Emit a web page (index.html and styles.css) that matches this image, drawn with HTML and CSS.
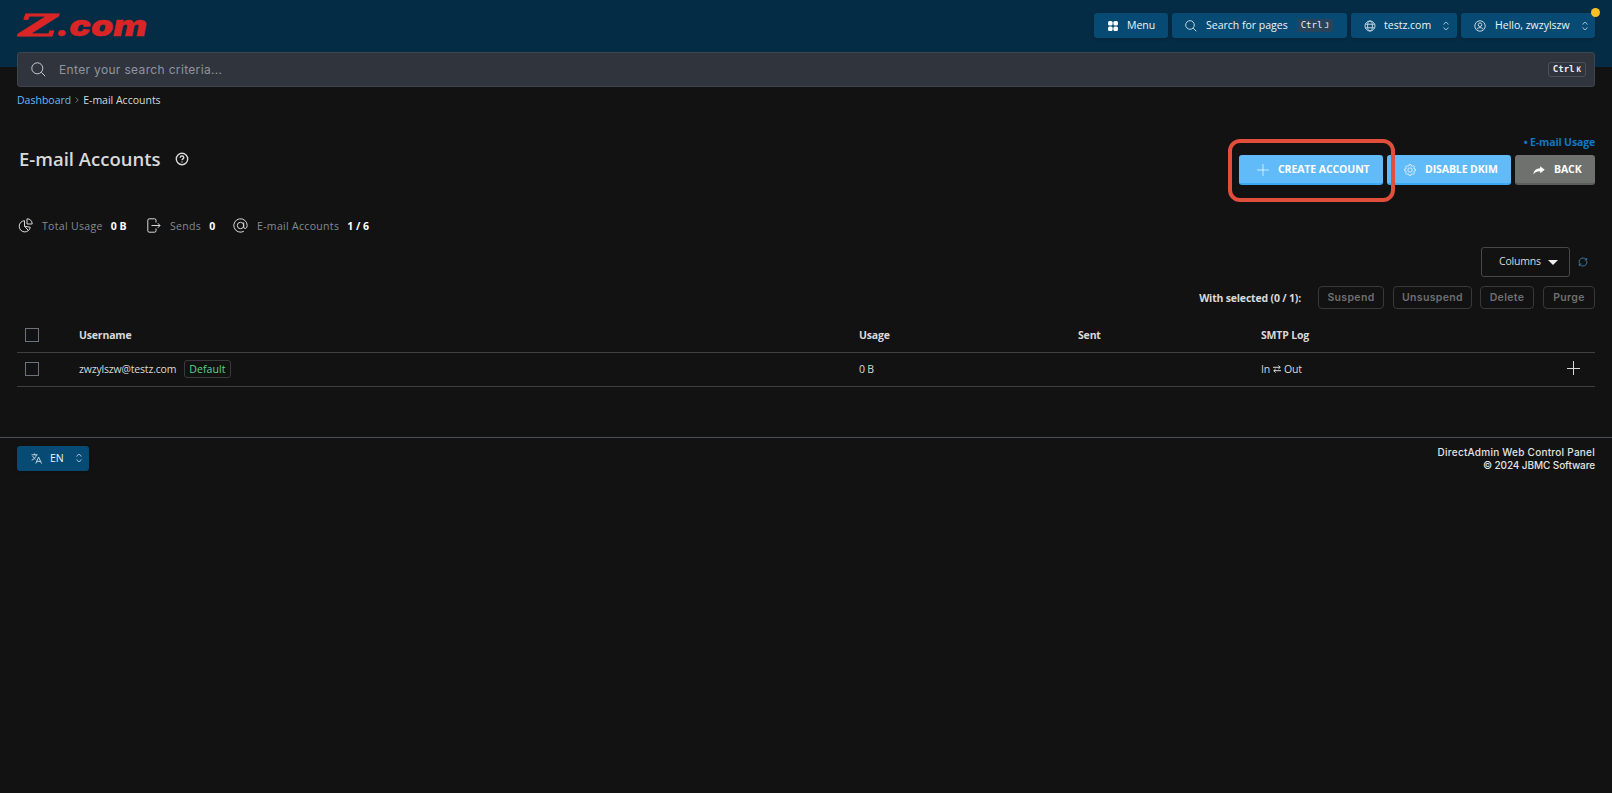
FILE: index.html
```html
<!DOCTYPE html>
<html lang="en">
<head>
  <meta charset="UTF-8">
  <meta name="viewport" content="width=device-width, initial-scale=1.0">
  <title>E-mail Accounts</title>
  <link rel="stylesheet" href="styles.css">
</head>
<body>

  <header class="header">
    <div class="topbar">
      <a class="logo" href="#">
        <svg width="140" height="48" viewBox="0 0 140 48">
          <text class="logo-z" x="2" y="35.5" textLength="38" lengthAdjust="spacingAndGlyphs">Z</text>
          <text class="logo-com" x="39" y="35.5" textLength="91" lengthAdjust="spacingAndGlyphs">.com</text>
        </svg>
      </a>
      <nav class="nav">
        <button class="nav-btn nav-menu">
          <svg class="icon" width="10" height="10" viewBox="0 0 10 10" fill="#fff"><rect width="4.6" height="4.6" rx="1.5"/><rect x="5.4" width="4.6" height="4.6" rx="1.5"/><rect y="5.4" width="4.6" height="4.6" rx="1.5"/><rect x="5.4" y="5.4" width="4.6" height="4.6" rx="1.5"/></svg>
          <span>Menu</span>
        </button>
        <button class="nav-btn nav-search">
          <svg class="icon" width="12" height="12" viewBox="0 0 12 12"><circle cx="5" cy="5" r="4.3"/><path d="M8.2 8.2L11.3 11.3"/></svg>
          <span>Search for pages</span>
          <kbd class="kbd-soft">Ctrl<small>J</small></kbd>
        </button>
        <button class="nav-btn nav-domain">
          <svg class="icon" width="12" height="12" viewBox="0 0 12 12"><circle cx="6" cy="6" r="5"/><ellipse cx="6" cy="6" rx="2.4" ry="5"/><path d="M1.5 4.2H10.5M1.5 7.8H10.5"/></svg>
          <span>testz.com</span>
          <svg class="icon updown" width="6" height="10" viewBox="0 0 6 10"><path d="M.8 3.5V2.9L3 1.2 5.2 2.9V3.5M.8 6.5V7.1L3 8.8 5.2 7.1V6.5"/></svg>
        </button>
        <button class="nav-btn nav-user">
          <svg class="icon" width="12" height="12" viewBox="0 0 12 12"><circle cx="6" cy="6" r="5.2"/><circle cx="6" cy="4.7" r="1.8"/><path d="M2.8 9.6C3.3 7.8 4.5 7.7 6 7.7S8.7 7.8 9.2 9.6"/></svg>
          <span>Hello, zwzylszw</span>
          <svg class="icon updown" width="6" height="10" viewBox="0 0 6 10"><path d="M.8 3.5V2.9L3 1.2 5.2 2.9V3.5M.8 6.5V7.1L3 8.8 5.2 7.1V6.5"/></svg>
          <i class="dot"></i>
        </button>
      </nav>
    </div>
  </header>

  <div class="search">
    <svg class="icon" width="15" height="15" viewBox="0 0 15 15"><circle cx="6.3" cy="6.3" r="5.5"/><path d="M10.3 10.3L14.2 14.2"/></svg>
    <span class="search-text">Enter your search criteria...</span>
    <kbd class="kbd-box">Ctrl<small>K</small></kbd>
  </div>

  <div class="breadcrumb">
    <a href="#">Dashboard</a>
    <svg width="4" height="6" viewBox="0 0 4 6"><path d="M.7.5L3.2 3 .7 5.5"/></svg>
    <span>E-mail Accounts</span>
  </div>

  <main class="main">
    <div class="page-head">
      <h1>E-mail Accounts
        <svg width="14" height="14" viewBox="0 0 14 14"><circle cx="7" cy="7" r="5.7"/><path d="M5.2 5.7C5.2 3.4 8.8 3.5 8.8 5.6 8.8 6.8 7 6.9 7 8.3M7 9.4V10.6"/></svg>
      </h1>
      <div class="actions">
        <a class="usage-link" href="#">• E-mail Usage</a>
        <div class="action-row">
          <div class="highlight-wrap">
            <button class="action create">
              <svg width="12" height="12" viewBox="0 0 12 12"><path d="M6 0V12M0 6H12"/></svg>
              <span>CREATE ACCOUNT</span>
            </button>
            <i class="highlight"></i>
          </div>
          <button class="action dkim">
            <svg width="12" height="12" viewBox="0 0 12 12"><path d="M5 .6H7L7.3 2 8.3 2.4 9.5 1.6 10.6 2.8 9.7 4 10 4.8 11.4 5.1V6.9L10 7.2 9.7 8.1 10.5 9.3 9.2 10.5 8.1 9.7 7.3 10.1 7 11.4H5L4.7 10.1 3.8 9.7 2.7 10.5 1.5 9.3 2.3 8.1 2 7.2.6 6.9V5.1L2 4.8 2.3 4 1.5 2.7 2.7 1.6 3.8 2.3 4.7 2Z"/><circle cx="6" cy="6" r="2.2"/></svg>
            <span>DISABLE DKIM</span>
          </button>
          <button class="action back">
            <svg width="12" height="9" viewBox="0 0 12 9"><path class="solid" d="M7.2.3L11.7 3.8 7.2 7.2V5.3C4 5.2 2 6 .3 8.6.8 4.6 3.2 2.4 7.2 2.3Z"/></svg>
            <span>BACK</span>
          </button>
        </div>
      </div>
    </div>

    <div class="stats">
      <div class="stat stat-usage">
        <svg class="icon" width="15" height="15" viewBox="0 0 15 15"><path d="M6.5 2.7A5.6 5.6 0 1 0 12.3 9.3L6.5 8.2ZM6.5 8.2L10.3 12.4M9 .8V6H14.2C14.2 2.8 12 .8 9 .8Z"/></svg>
        <span>Total Usage</span>
        <b>0 B</b>
      </div>
      <div class="stat stat-sends">
        <svg class="icon" width="14" height="15" viewBox="0 0 14 15"><path d="M9 4.5V2.2Q9 .8 7.6.8H2.2Q.8.8.8 2.2V12.8Q.8 14.2 2.2 14.2H7.6Q9 14.2 9 12.8V10.5M4.5 7.5H13M10.8 5.2L13 7.5 10.8 9.8"/></svg>
        <span>Sends</span>
        <b>0</b>
      </div>
      <div class="stat stat-accounts">
        <svg class="icon" width="15" height="15" viewBox="0 0 15 15"><circle cx="7.5" cy="7.5" r="3.2"/><path d="M10.7 4.5V9Q10.9 10.7 12.4 10.5 14.2 9.9 14.2 7.5A6.7 6.7 0 1 0 10.8 13.3"/></svg>
        <span>E-mail Accounts</span>
        <b>1 / 6</b>
      </div>
    </div>

    <div class="tools">
      <button class="columns"><span>Columns</span><i class="caret"></i></button>
      <svg class="refresh" width="10" height="10" viewBox="0 0 10 10"><path d="M1.2 6.2C.5 3.2 2.5 1 5 1 6.8 1 7.8 1.8 8.5 3M8.7 1V3.1H6.7M8.8 3.9C9.5 6.8 7.5 9 5 9 3.2 9 2.2 8.2 1.5 7M1.3 9V6.9H3.3"/></svg>
    </div>

    <div class="bulk">
      <b>With selected (0 / 1):</b>
      <button class="suspend">Suspend</button>
      <button class="unsuspend">Unsuspend</button>
      <button class="delete">Delete</button>
      <button class="purge">Purge</button>
    </div>

    <table class="accounts">
      <tr>
        <th class="check"><i class="checkbox"></i></th>
        <th class="user">Username</th>
        <th class="usage">Usage</th>
        <th class="sent">Sent</th>
        <th>SMTP Log</th>
        <th class="more"></th>
      </tr>
      <tr>
        <td><i class="checkbox"></i></td>
        <td><div class="account"><span class="address">zwzylszw@testz.com</span><span class="tag">Default</span></div></td>
        <td>0 B</td>
        <td></td>
        <td><span class="log">In <svg width="8" height="8" viewBox="0 0 8 8"><path d="M0 2.3H7M5.3.5L7.3 2.3 5.3 4.1M8 5.7H1M2.7 3.9L.7 5.7 2.7 7.5"/></svg> Out</span></td>
        <td class="more"><svg width="14" height="14" viewBox="0 0 14 14"><path d="M7.5 0V14M1 7.5H14"/></svg></td>
      </tr>
    </table>
  </main>

  <footer class="footer">
    <button class="nav-btn lang">
      <svg class="icon" width="11" height="11" viewBox="0 0 11 11"><path d="M.5 1.8H6.5M3.5.5V1.8M5.5 1.8C5 4 3 6.2.7 7.2M1.7 3.2C2.4 4.8 3.2 5.6 4.5 6.4M4.8 10.5L7.6 4 10.5 10.5M5.7 8.4H9.6"/></svg>
      <span>EN</span>
      <svg class="icon updown" width="6" height="10" viewBox="0 0 6 10"><path d="M.8 3.5V2.9L3 1.2 5.2 2.9V3.5M.8 6.5V7.1L3 8.8 5.2 7.1V6.5"/></svg>
    </button>
    <div class="copyright">
      <div class="product">DirectAdmin Web Control Panel</div>
      <div class="company">© 2024 JBMC Software</div>
    </div>
  </footer>

</body>
</html>
```
FILE: styles.css
```css
* {
  box-sizing: border-box;
}

body {
  margin: 0;
  background-color: #121212;
  color: #d9d9d9;
  font-family: "Open Sans", "Noto Sans", sans-serif;
  font-size: 10.5px;
  line-height: 14px;
}

a {
  text-decoration: none;
}

button {
  font-family: inherit;
  font-size: inherit;
  line-height: inherit;
  border: none;
  padding: 0;
  cursor: pointer;
}

svg {
  display: block;
  flex: none;
  fill: none;
  stroke: currentColor;
}

i {
  display: block;
}

/* Header */
.header {
  height: 67px;
  background-color: #042c44;
}

.topbar {
  display: flex;
  justify-content: space-between;
  align-items: flex-start;
  padding: 13px 17px 0;
}

.logo svg {
  margin-top: -13px;
  stroke: none;
  fill: #d92525;
}

.logo text {
  font-weight: 900;
  font-style: italic;
}

.logo-z {
  font-family: "DejaVu Serif", serif;
  font-size: 29px;
  stroke: #d92525;
  stroke-width: 0.8;
}

.logo-com {
  font-family: Inter, sans-serif;
  font-size: 29px;
  stroke: #d92525;
  stroke-width: 0.4;
}

.nav {
  display: flex;
  gap: 4px;
}

.nav-btn {
  position: relative;
  display: flex;
  align-items: center;
  height: 25px;
  padding: 0 14px 1px 12px;
  border-radius: 3px;
  background-color: #074b74;
  color: #eef3f6;
  font-weight: 500;
  box-shadow: 0 1px 3px rgba(0, 0, 0, 0.2);
  white-space: nowrap;
}

.nav-btn .icon {
  margin-top: 1px;
  color: #c3d4df;
}

.nav-btn .updown {
  margin-left: auto;
  color: #9fbccd;
}

.nav-menu {
  width: 74px;
  gap: 9px;
  padding-left: 14px;
}

.nav-menu .icon {
  stroke: none;
  fill: #fff;
}

.nav-search {
  width: 175px;
  gap: 9px;
  padding-left: 13px;
}

.nav-domain {
  width: 106px;
  gap: 8px;
  padding: 0 8px 1px 13px;
}

.nav-user {
  width: 134px;
  gap: 9px;
  padding: 0 7px 1px 13px;
}

.dot {
  position: absolute;
  top: -5px;
  right: -5px;
  width: 9px;
  height: 9px;
  border-radius: 50%;
  background-color: #fbbf24;
}

kbd {
  font-family: "DejaVu Sans Mono", monospace;
  font-size: 9px;
  line-height: 13px;
  border-radius: 3px;
}

kbd small {
  margin-left: 2px;
  font-size: 7.5px;
}

.kbd-soft {
  padding: 0 4px;
  background-color: #29435a;
}

.search {
  display: flex;
  align-items: center;
  height: 35px;
  margin: -15px 17px 0;
  padding: 0 8px 0 13px;
  border: 1px solid #3f4550;
  border-radius: 3px;
  background-color: #30343d;
}

.search .icon {
  color: #c8ccd2;
}

.search-text {
  flex: 1;
  margin-left: 13px;
  color: #8f949d;
  font-family: Inter, sans-serif;
  font-size: 12px;
  letter-spacing: 0.34px;
}

.kbd-box {
  padding: 0 4px;
  border: 1px solid #4a505c;
  color: #eee;
  font-weight: bold;
}

.breadcrumb {
  display: flex;
  align-items: center;
  gap: 4px;
  margin: 6px 17px 0;
}

.breadcrumb a {
  color: #62bdf8;
}

.breadcrumb svg {
  color: #777;
}

/* Page title and actions */
.main {
  padding: 0 17px;
}

.page-head {
  display: flex;
  justify-content: space-between;
  height: 78px;
  padding-top: 28px;
}

h1 {
  display: flex;
  align-items: center;
  gap: 14px;
  height: 24px;
  margin: 12px 0 0 2px;
  font-size: 18.5px;
  font-weight: 600;
}

h1 svg {
  stroke-width: 1.4;
}

.actions {
  display: flex;
  flex-direction: column;
  align-items: flex-end;
  gap: 6px;
}

.usage-link {
  color: #0f78c4;
  font-weight: bold;
  letter-spacing: -0.15px;
}

.action-row {
  display: flex;
  gap: 4px;
}

.highlight-wrap {
  position: relative;
}

.highlight {
  position: absolute;
  top: -16px;
  left: -11px;
  width: 167px;
  height: 63px;
  border: 4px solid #e24e3c;
  border-radius: 12px;
  z-index: 1;
}

.action {
  display: flex;
  align-items: center;
  height: 30px;
  border-radius: 3px;
  background-color: #60bbf8;
  border-bottom: 2px solid #3ba9f3;
  color: #fff;
  font-weight: bold;
  letter-spacing: -0.1px;
  white-space: nowrap;
}

.action svg {
  stroke-width: 0.7;
  margin-top: 2px;
}

.create {
  width: 144px;
  padding-left: 18px;
  gap: 9px;
}

.dkim {
  width: 124px;
  padding-left: 17px;
  gap: 9px;
}

.back {
  width: 80px;
  padding-left: 18px;
  gap: 9px;
  background-color: #6f716f;
  border-color: #5c5e5c;
}

.solid {
  fill: #fff;
  stroke: none;
}

/* Usage summary */
.stats {
  display: flex;
  gap: 18px;
  height: 15px;
  margin-top: 33px;
  margin-bottom: 14px;
}

.stat {
  display: flex;
  align-items: center;
  white-space: nowrap;
}

.stat-usage {
  width: 111px;
  margin-left: 1px;
}

.stat-sends {
  width: 68px;
}

.stat span {
  margin: 0 8px 0 9px;
  color: #858a91;
  letter-spacing: 0.32px;
}

.stat b {
  color: #fff;
}

/* Table tools */
.tools {
  display: flex;
  justify-content: flex-end;
  align-items: center;
  gap: 8px;
  padding-right: 7px;
}

.columns {
  display: flex;
  align-items: center;
  gap: 7px;
  width: 89px;
  height: 30px;
  padding: 0 0 2px 17px;
  border: 1px solid #48484a;
  border-radius: 3px;
  background: transparent;
  color: #d9d9d9;
  letter-spacing: -0.2px;
}

.caret {
  margin-top: 2px;
  border: 5px solid transparent;
  border-top-color: #eee;
  border-bottom: 0;
}

.refresh {
  color: #3d7fa8;
  stroke-width: 0.9;
}

.bulk {
  display: flex;
  justify-content: flex-end;
  align-items: center;
  margin-top: 9px;
}

.bulk b {
  margin-right: 17px;
  letter-spacing: -0.18px;
}

.bulk button {
  height: 23px;
  border: 1px solid #38383a;
  border-radius: 4px;
  background: transparent;
  color: #6f6f70;
  font-family: Inter, sans-serif;
  font-weight: 600;
  letter-spacing: 0.35px;
}

.suspend {
  width: 66px;
  margin-right: 9px;
}

.unsuspend {
  width: 79px;
  margin-right: 8px;
}

.delete {
  width: 54px;
  margin-right: 9px;
}

.purge {
  width: 52px;
}

/* Accounts */
.accounts {
  width: 100%;
  margin-top: 9px;
  border-collapse: collapse;
  table-layout: fixed;
}

.accounts th,
.accounts td {
  height: 34px;
  padding: 0;
  border-bottom: 1px solid #3f3f41;
  text-align: left;
  letter-spacing: -0.18px;
  white-space: nowrap;
}

.accounts .check {
  width: 62px;
}

.accounts .user {
  width: 780px;
}

.accounts .usage {
  width: 219px;
}

.accounts .sent {
  width: 183px;
}

.accounts th.more {
  width: 29px;
}

.accounts td.more {
  padding-bottom: 3px;
}

.checkbox {
  width: 14px;
  height: 14px;
  margin-left: 8px;
  border: 1px solid #6b7280;
}

.account {
  display: flex;
  align-items: center;
  gap: 8px;
}

.tag {
  height: 18px;
  padding: 1px 4px;
  border: 1px solid #3a3a3c;
  border-radius: 3px;
  color: #5fd388;
  letter-spacing: 0.1px;
}

.log {
  display: flex;
  align-items: center;
  gap: 3px;
}

/* Footer */
.footer {
  display: flex;
  justify-content: space-between;
  margin-top: 50px;
  padding: 8px 17px;
  border-top: 1px solid #4a4f57;
}

.lang {
  width: 72px;
  gap: 8px;
  padding: 0 7px 1px 14px;
}

.copyright {
  color: #e2e2e2;
  font-family: Inter, sans-serif;
  font-size: 10px;
  font-weight: 500;
  line-height: 13px;
  text-align: right;
}

.product {
  letter-spacing: 0.25px;
}

.company {
  letter-spacing: -0.1px;
}
```
